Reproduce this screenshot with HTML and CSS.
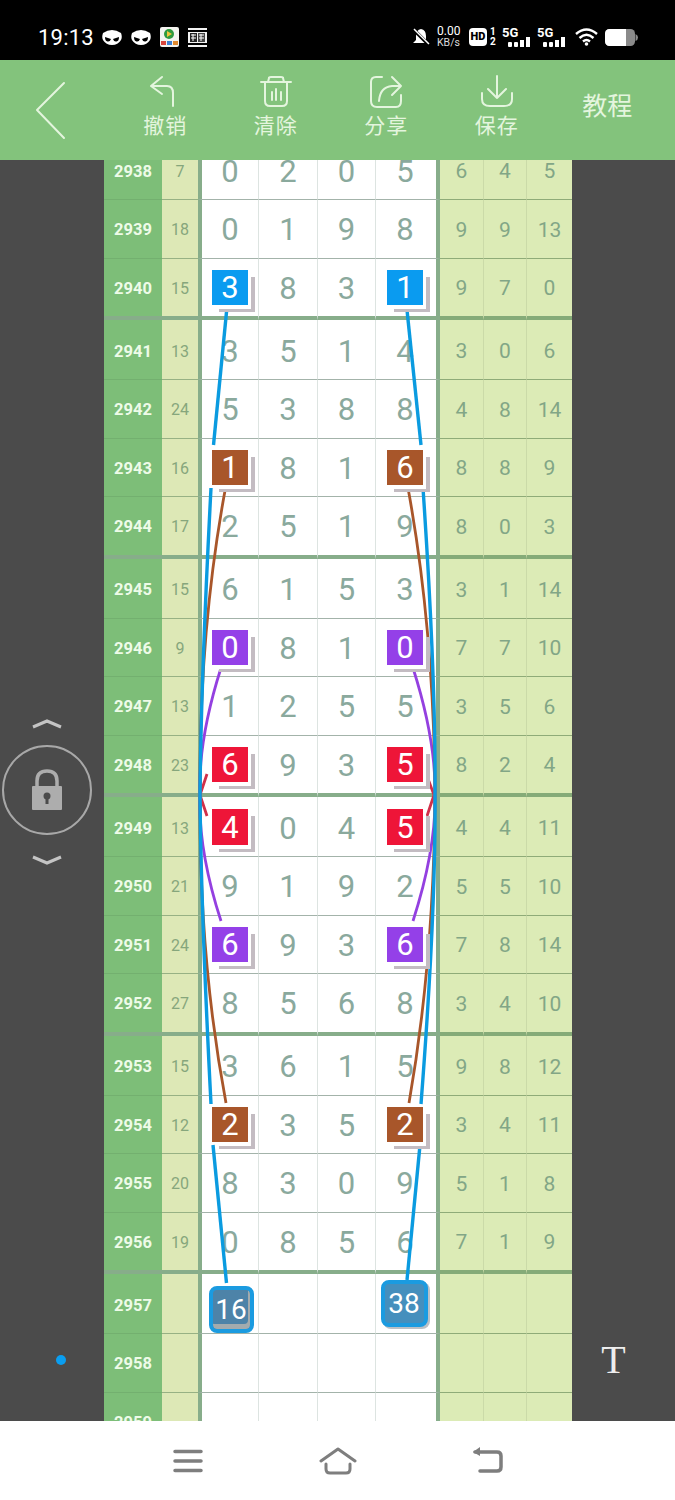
FILE: index.html
```html
<!DOCTYPE html>
<html lang="zh-CN">
<head>
  <meta charset="UTF-8">
  <title>走势图</title>
  <link rel="stylesheet" href="styles.css">
</head>
<body>

<div id="statusBar">
  <div class="status-left">
    <span class="clock">19:13</span>
    <svg class="st-icon" width="20" height="18" viewBox="0 0 20 18"><path fill="#fff" d="M1 5 Q10 -1 19 5 Q20.500 9 19 12 Q16 17 10 17 Q4 17 1 12 Q-.5 9 1 5Z"/><path fill="#000" d="M3 9 L9 11 Q8 14 5.500 13.500 Q3 13 3 9ZM17 9 L11 11 Q12 14 14.500 13.500 Q17 13 17 9Z"/></svg>
    <svg class="st-icon" width="20" height="18" viewBox="0 0 20 18"><path fill="#fff" d="M1 5 Q10 -1 19 5 Q20.500 9 19 12 Q16 17 10 17 Q4 17 1 12 Q-.5 9 1 5Z"/><path fill="#000" d="M3 9 L9 11 Q8 14 5.500 13.500 Q3 13 3 9ZM17 9 L11 11 Q12 14 14.500 13.500 Q17 13 17 9Z"/></svg>
    <svg class="st-icon" width="19" height="20" viewBox="0 0 19 20"><rect width="19" height="20" rx="2" fill="#f4f4f0"/><circle cx="9" cy="7" r="5" fill="#2f9a3e"/><path d="M7 4 L12 7 L7 10Z" fill="#f0c53c"/><rect x="1" y="14" width="5" height="4" fill="#d9463c"/><rect x="7" y="14" width="5" height="4" fill="#3f7fd0"/><rect x="13" y="14" width="5" height="4" fill="#e08a30"/></svg>
    <svg class="st-icon" width="19" height="19" viewBox="0 0 19 19"><rect width="19" height="19" fill="#f2f2f2"/><rect x="0" y="2" width="19" height="2" fill="#000"/><rect x="0" y="15" width="19" height="2" fill="#000"/><rect x="2" y="5" width="7" height="9" fill="#222"/><rect x="10" y="5" width="7" height="9" fill="#444"/><path d="M3 7h5M3 10h5M5 6v7M11 7h5M11 10h5M13 6v7" stroke="#fff" stroke-width="1"/></svg>
  </div>
  <div class="status-right">
    <svg class="bell" width="18" height="18" viewBox="0 0 18 18"><path fill="#fff" d="M9 1 Q14 2 14 8 L14 12 L17 15 L1 15 L4 12 L4 8 Q4 2 9 1Z"/><path d="M1 1 L17 17" stroke="#000" stroke-width="3.500"/><path d="M2 1 L17 16" stroke="#fff" stroke-width="1.500"/></svg>
    <div class="speed"><span>0.00</span><span class="speed-unit">KB/s</span></div>
    <div class="hd">HD</div>
    <div class="sim"><span>1</span><span>2</span></div>
    <div class="net">
      <span>5G</span>
      <svg width="28" height="10" viewBox="0 0 28 10"><rect x="6" y="5" width="4" height="5" rx="1"/><rect x="12" y="5" width="4" height="5" rx="1"/><rect x="18" y="3" width="4" height="7"/><rect x="24" y="0" width="4" height="10"/></svg>
    </div>
    <div class="net">
      <span>5G</span>
      <svg width="28" height="10" viewBox="0 0 28 10"><rect x="6" y="5" width="4" height="5" rx="1"/><rect x="12" y="5" width="4" height="5" rx="1"/><rect x="18" y="3" width="4" height="7"/><rect x="24" y="0" width="4" height="10"/></svg>
    </div>
    <svg class="wifi" width="23" height="18" viewBox="0 0 23 18"><path d="M1 6 Q11.500 -3 22 6M4.500 10 Q11.500 3.500 18.500 10M8 13.500 Q11.500 10.500 15 13.500" fill="none" stroke="#fff" stroke-width="2.400"/><circle cx="11.500" cy="16" r="1.800" fill="#fff"/></svg>
    <svg class="battery" width="33" height="17" viewBox="0 0 33 17"><rect width="30" height="17" rx="4.500" fill="#8a8a8a"/><path d="M4.500 0H21V17H4.500A4.500 4.500 0 0 1 0 12.500V4.500A4.500 4.500 0 0 1 4.500 0Z" fill="#fff"/><path d="M30.500 5 Q33 6 33 8.500 Q33 11 30.500 12Z" fill="#8a8a8a"/></svg>
  </div>
</div>

<div id="toolbar">
  <div class="back">
    <svg width="40" height="64" viewBox="0 0 40 64"><path class="line" d="M31 3 L4 30 L31 58" stroke-width="2.500"/></svg>
  </div>
  <div class="tool">
    <svg width="36" height="36" viewBox="0 0 36 36"><path class="line" d="M15 3 L4 12 L15 20M4 12 L20 12 Q26 12 26 19 L26 32"/></svg>
    <span>撤销</span>
  </div>
  <div class="tool">
    <svg width="36" height="36" viewBox="0 0 36 36"><path class="line" d="M3 8 L33 8M10 8 L11 4 Q11 3 13 3 L23 3 Q25 3 25 4 L26 8M7 9 L7 27 Q7 32 12 32 L24 32 Q29 32 29 27 L29 9M14 18 L14 26M18 15 L18 26M23 18 L23 26"/></svg>
    <span>清除</span>
  </div>
  <div class="tool">
    <svg width="36" height="36" viewBox="0 0 36 36"><path class="line" d="M14 3 L8 3 Q3 3 3 8 L3 27 Q3 33 9 33 L28 33 Q33 33 33 27 L33 21M24 3 L33 12 L24 21M33 12 L24 12 Q12 13 11 27"/></svg>
    <span>分享</span>
  </div>
  <div class="tool">
    <svg width="36" height="36" viewBox="0 0 36 36"><path class="line" d="M18 2 L18 24M9 15 L18 24 L27 15M3 19 L3 25 Q3 32 11 32 L25 32 Q33 32 33 25 L33 19"/></svg>
    <span>保存</span>
  </div>
  <div class="tool-text">教程</div>
</div>

<div id="main">
  <div class="side side-left">
    <svg class="chev" width="30" height="10" viewBox="0 0 30 10"><path d="M1 8 L15 2 L29 8"/></svg>
    <div class="lock-ring">
      <svg width="32" height="42" viewBox="0 0 32 42"><path d="M6 18 L6 12 Q6 2 16 2 Q26 2 26 12 L26 18" fill="none" stroke="#adadad" stroke-width="3.500"/><rect x="1" y="17" width="30" height="24" rx="1" fill="#adadad"/><circle cx="16" cy="27" r="3.500" fill="#4b4b4b"/><rect x="14.500" y="28" width="3" height="7" fill="#4b4b4b"/></svg>
    </div>
    <svg class="chev chev-down" width="30" height="10" viewBox="0 0 30 10"><path d="M1 2 L15 8 L29 2"/></svg>
    <div class="dot"></div>
  </div>

  <div id="board">
    <div class="row"><div class="no">2938</div><div class="sum">7</div><div class="d d1">0</div><div class="d d2">2</div><div class="d d3">0</div><div class="d d4">5</div><div class="b b1">6</div><div class="b b2">4</div><div class="b">5</div></div>
    <div class="row"><div class="no">2939</div><div class="sum">18</div><div class="d d1">0</div><div class="d d2">1</div><div class="d d3">9</div><div class="d d4">8</div><div class="b b1">9</div><div class="b b2">9</div><div class="b">13</div></div>
    <div class="row last"><div class="no">2940</div><div class="sum">15</div><div class="d d1"><span class="tag blue">3</span></div><div class="d d2">8</div><div class="d d3">3</div><div class="d d4"><span class="tag blue">1</span></div><div class="b b1">9</div><div class="b b2">7</div><div class="b">0</div></div>

    <div class="row first"><div class="no">2941</div><div class="sum">13</div><div class="d d1">3</div><div class="d d2">5</div><div class="d d3">1</div><div class="d d4">4</div><div class="b b1">3</div><div class="b b2">0</div><div class="b">6</div></div>
    <div class="row"><div class="no">2942</div><div class="sum">24</div><div class="d d1">5</div><div class="d d2">3</div><div class="d d3">8</div><div class="d d4">8</div><div class="b b1">4</div><div class="b b2">8</div><div class="b">14</div></div>
    <div class="row"><div class="no">2943</div><div class="sum">16</div><div class="d d1"><span class="tag brown">1</span></div><div class="d d2">8</div><div class="d d3">1</div><div class="d d4"><span class="tag brown">6</span></div><div class="b b1">8</div><div class="b b2">8</div><div class="b">9</div></div>
    <div class="row last"><div class="no">2944</div><div class="sum">17</div><div class="d d1">2</div><div class="d d2">5</div><div class="d d3">1</div><div class="d d4">9</div><div class="b b1">8</div><div class="b b2">0</div><div class="b">3</div></div>

    <div class="row first"><div class="no">2945</div><div class="sum">15</div><div class="d d1">6</div><div class="d d2">1</div><div class="d d3">5</div><div class="d d4">3</div><div class="b b1">3</div><div class="b b2">1</div><div class="b">14</div></div>
    <div class="row"><div class="no">2946</div><div class="sum">9</div><div class="d d1"><span class="tag purple">0</span></div><div class="d d2">8</div><div class="d d3">1</div><div class="d d4"><span class="tag purple">0</span></div><div class="b b1">7</div><div class="b b2">7</div><div class="b">10</div></div>
    <div class="row"><div class="no">2947</div><div class="sum">13</div><div class="d d1">1</div><div class="d d2">2</div><div class="d d3">5</div><div class="d d4">5</div><div class="b b1">3</div><div class="b b2">5</div><div class="b">6</div></div>
    <div class="row last"><div class="no">2948</div><div class="sum">23</div><div class="d d1"><span class="tag red">6</span></div><div class="d d2">9</div><div class="d d3">3</div><div class="d d4"><span class="tag red">5</span></div><div class="b b1">8</div><div class="b b2">2</div><div class="b">4</div></div>

    <div class="row first"><div class="no">2949</div><div class="sum">13</div><div class="d d1"><span class="tag red">4</span></div><div class="d d2">0</div><div class="d d3">4</div><div class="d d4"><span class="tag red">5</span></div><div class="b b1">4</div><div class="b b2">4</div><div class="b">11</div></div>
    <div class="row"><div class="no">2950</div><div class="sum">21</div><div class="d d1">9</div><div class="d d2">1</div><div class="d d3">9</div><div class="d d4">2</div><div class="b b1">5</div><div class="b b2">5</div><div class="b">10</div></div>
    <div class="row"><div class="no">2951</div><div class="sum">24</div><div class="d d1"><span class="tag purple">6</span></div><div class="d d2">9</div><div class="d d3">3</div><div class="d d4"><span class="tag purple">6</span></div><div class="b b1">7</div><div class="b b2">8</div><div class="b">14</div></div>
    <div class="row last"><div class="no">2952</div><div class="sum">27</div><div class="d d1">8</div><div class="d d2">5</div><div class="d d3">6</div><div class="d d4">8</div><div class="b b1">3</div><div class="b b2">4</div><div class="b">10</div></div>

    <div class="row first"><div class="no">2953</div><div class="sum">15</div><div class="d d1">3</div><div class="d d2">6</div><div class="d d3">1</div><div class="d d4">5</div><div class="b b1">9</div><div class="b b2">8</div><div class="b">12</div></div>
    <div class="row"><div class="no">2954</div><div class="sum">12</div><div class="d d1"><span class="tag brown">2</span></div><div class="d d2">3</div><div class="d d3">5</div><div class="d d4"><span class="tag brown">2</span></div><div class="b b1">3</div><div class="b b2">4</div><div class="b">11</div></div>
    <div class="row"><div class="no">2955</div><div class="sum">20</div><div class="d d1">8</div><div class="d d2">3</div><div class="d d3">0</div><div class="d d4">9</div><div class="b b1">5</div><div class="b b2">1</div><div class="b">8</div></div>
    <div class="row last"><div class="no">2956</div><div class="sum">19</div><div class="d d1">0</div><div class="d d2">8</div><div class="d d3">5</div><div class="d d4">6</div><div class="b b1">7</div><div class="b b2">1</div><div class="b">9</div></div>

    <div class="row first"><div class="no">2957</div><div class="sum"></div><div class="d d1"><span class="pick pick-low">16</span></div><div class="d d2"></div><div class="d d3"></div><div class="d d4"><span class="pick pick-high">38</span></div><div class="b b1"></div><div class="b b2"></div><div class="b"></div></div>
    <div class="row"><div class="no">2958</div><div class="sum"></div><div class="d d1"></div><div class="d d2"></div><div class="d d3"></div><div class="d d4"></div><div class="b b1"></div><div class="b b2"></div><div class="b"></div></div>
    <div class="row"><div class="no">2959</div><div class="sum"></div><div class="d d1"></div><div class="d d2"></div><div class="d d3"></div><div class="d d4"></div><div class="b b1"></div><div class="b b2"></div><div class="b"></div></div>

    <!-- lines between the marked numbers, in screen coordinates -->
    <svg class="links" width="675" height="1261" viewBox="0 160 675 1261">
      <g class="link-red">
        <path d="M207 774 L200 795 L207 816"/>
        <path d="M427 776 L434 795 L427 816"/>
      </g>
      <g class="link-purple">
        <path d="M221 668 Q198 740 200 795 Q198 850 221 921"/>
        <path d="M413 668 Q436 740 435 795 Q436 850 413 921"/>
      </g>
      <g class="link-brown">
        <path d="M225.500 488 Q199 630 200 795 Q199 960 226 1103"/>
        <path d="M408 488 Q434 630 435 795 Q434 960 409 1103"/>
      </g>
      <g class="link-blue">
        <path d="M226.700 310 L213.500 445"/>
        <path d="M407 310 L421 445"/>
        <path d="M211 488 Q201 680 200 795 Q201 910 211 1104"/>
        <path d="M423 488 Q436 680 435 795 Q436 910 421 1104"/>
        <path d="M213 1145 L226.500 1283"/>
        <path d="M420 1145 L407 1280"/>
      </g>
    </svg>
  </div>

  <div class="side side-right">
    <div class="font-btn">T</div>
  </div>
</div>

<div id="navBar">
  <svg width="30" height="26" viewBox="0 0 30 26"><path class="nav-line" d="M2 3.500 L28 3.500M2 13 L28 13M2 22.500 L28 22.500" stroke-width="3.500"/></svg>
  <svg width="38" height="30" viewBox="0 0 38 30"><path class="nav-line" d="M2 15 L19 3 L36 15M7 18 L7 23 Q7 27 11 27 L27 27 Q31 27 31 23 L31 18" stroke-width="3"/></svg>
  <svg width="32" height="28" viewBox="0 0 32 28"><path class="nav-line" d="M3 5 L25 5 Q29 5 29 9 L29 20 Q29 24 25 24 L8 24" stroke-width="3.500"/><path d="M1 5 L8 0 L8 9Z" fill="#7e7e7e"/></svg>
</div>

</body>
</html>
```

FILE: styles.css
```css
* { box-sizing: border-box; }
body { margin: 0; width: 675px; height: 1500px; overflow: hidden; background-color: #fff; font-family: Roboto, "Noto Sans CJK SC", sans-serif; }

/* status bar */
#statusBar { height: 60px; background-color: #000; color: #fff; display: flex; justify-content: space-between; align-items: center; padding: 14px 37px 0 38px; }
.status-left, .status-right { display: flex; align-items: center; }
.clock { font-size: 22px; width: 64px; letter-spacing: .2px; }
.st-icon { margin-right: 9px; }
.bell { margin-right: 7px; }
.speed { display: flex; flex-direction: column; width: 32px; font-size: 12px; line-height: 11px; }
.speed-unit { font-size: 10.5px; color: #ddd; }
.hd { width: 18px; height: 18px; border-radius: 4px; background-color: #fff; color: #000; font-size: 11px; font-weight: 900; text-align: center; line-height: 18px; }
.sim { display: flex; flex-direction: column; width: 15px; padding-left: 3px; font-size: 10px; font-weight: 700; line-height: 10px; }
.net { display: flex; flex-direction: column; width: 35px; font-size: 13px; font-weight: 700; line-height: 9px; }
.net svg { fill: #fff; }
.wifi { margin-right: 7px; margin-left: 3px; }

/* toolbar */
#toolbar { height: 100px; background-color: #83c37c; display: flex; padding-top: 14px; color: #e4f5de; }
.line { fill: none; stroke: #e4f5de; stroke-width: 2; stroke-linecap: round; stroke-linejoin: round; }
.back { width: 110px; padding: 6px 0 0 33px; }
.tool { width: 110.5px; display: flex; flex-direction: column; align-items: center; font-size: 21px; line-height: 28px; letter-spacing: 1px; }
.tool svg { margin-bottom: 2px; }
.tool-text { width: 110.5px; text-align: center; font-size: 25px; line-height: 66px; }

/* middle */
#main { height: 1261px; display: flex; overflow: hidden; background-color: #4b4b4b; }
.side { width: 104px; flex: none; display: flex; flex-direction: column; }
.side-left { padding-top: 559px; align-items: center; padding-right: 10px; }
.chev { fill: none; stroke: #c4c4c4; stroke-width: 3; }
.lock-ring { width: 90px; height: 90px; margin-top: 16px; border: 2px solid #a8a8a8; border-radius: 50%; display: flex; align-items: center; justify-content: center; }
.chev-down { margin-top: 20px; }
.dot { width: 10px; height: 10px; margin: 490px 0 0 28px; border-radius: 50%; background-color: #0a9ef0; }
.side-right { flex: 1; padding: 1174px 20px 0 0; align-items: center; }
.font-btn { font-family: "Liberation Serif", serif; font-size: 40px; line-height: 52px; color: #eee; }

/* board */
#board { position: relative; width: 468px; flex: none; margin-top: -18.5px; }
.row { display: grid; grid-template-columns: 58px 36px 61px 59px 58px 64px 44px 43px 45px; height: 58.5px; }
.row.first { height: 60px; }
.row.last { height: 61.5px; }
.row > div { display: flex; align-items: center; justify-content: center; padding-top: 2px; border-bottom: 1px solid #a3b3aa; }
.row.first > div { padding-top: 3px; }
.row.last > div { border-bottom-width: 4px; border-bottom-color: #87ad8a; }

.row > .no { background-color: #7dbe78; color: #eefbe8; font-size: 16.5px; font-weight: 700; border-bottom-color: #73b06f; }
.row > .sum { background-color: #dde8b6; color: #86a67c; font-size: 16px; border-bottom-color: #97b184; }
.row > .d { background-color: #fff; color: #8aa99d; font-size: 31px; }
.row > .d1 { border-left: 4px solid #87ad8a; border-right: 1px solid #dde4e1; }
.row > .d2, .row > .d3 { border-right: 1px solid #dde4e1; }
.row > .d4 { border-right: 4px solid #87ad8a; padding-right: 2px; }
.row > .b { background-color: #dcebb6; color: #82a686; font-size: 21px; border-bottom-color: #8fab78; }
.row > .b1, .row > .b2 { border-right: 1px solid #cbdaa8; }
.row.last > .b { border-bottom-color: #85ab78; }

.tag { width: 35.5px; height: 35.5px; margin-top: -2px; display: flex; align-items: center; justify-content: center; color: #fff; font-size: 31px; font-weight: 400; box-shadow: 3px 4px 0 #fff, 7px 7px 0 #c3bcc2; position: relative; z-index: 2; }
.blue { background-color: #0a9bf0; }
.brown { background-color: #a8562a; }
.purple { background-color: #9440e8; }
.red { background-color: #ee1538; }

.pick { display: flex; align-items: center; justify-content: center; border: 4px solid #1b9be0; border-radius: 8px; background-color: #4d83a8; color: #fff; font-size: 28px; position: relative; z-index: 2; }
.pick-low { width: 45px; height: 47px; margin: 9px 0 0 2px; box-shadow: inset -2px -5px 0 #a3abae; }
.pick-high { width: 47px; height: 47px; margin: -3px 2px 0 0; background-color: #458fbd; box-shadow: 2px 2px 0 #b9c0c6; }

.links { position: absolute; left: -104px; top: 18.5px; z-index: 1; pointer-events: none; }
.links path { fill: none; }
.link-red path { stroke: #d0304a; stroke-width: 2.8; }
.link-purple path { stroke: #9440e0; stroke-width: 2.8; }
.link-brown path { stroke: #a8562a; stroke-width: 2.8; }
.link-blue path { stroke: #0a9be0; stroke-width: 3.4; }

/* bottom nav */
#navBar { height: 79px; background-color: #fff; display: grid; grid-template-columns: 150px 150px 150px; justify-content: center; justify-items: center; align-items: center; }
.nav-line { fill: none; stroke: #7e7e7e; stroke-linecap: round; stroke-linejoin: round; }
```
